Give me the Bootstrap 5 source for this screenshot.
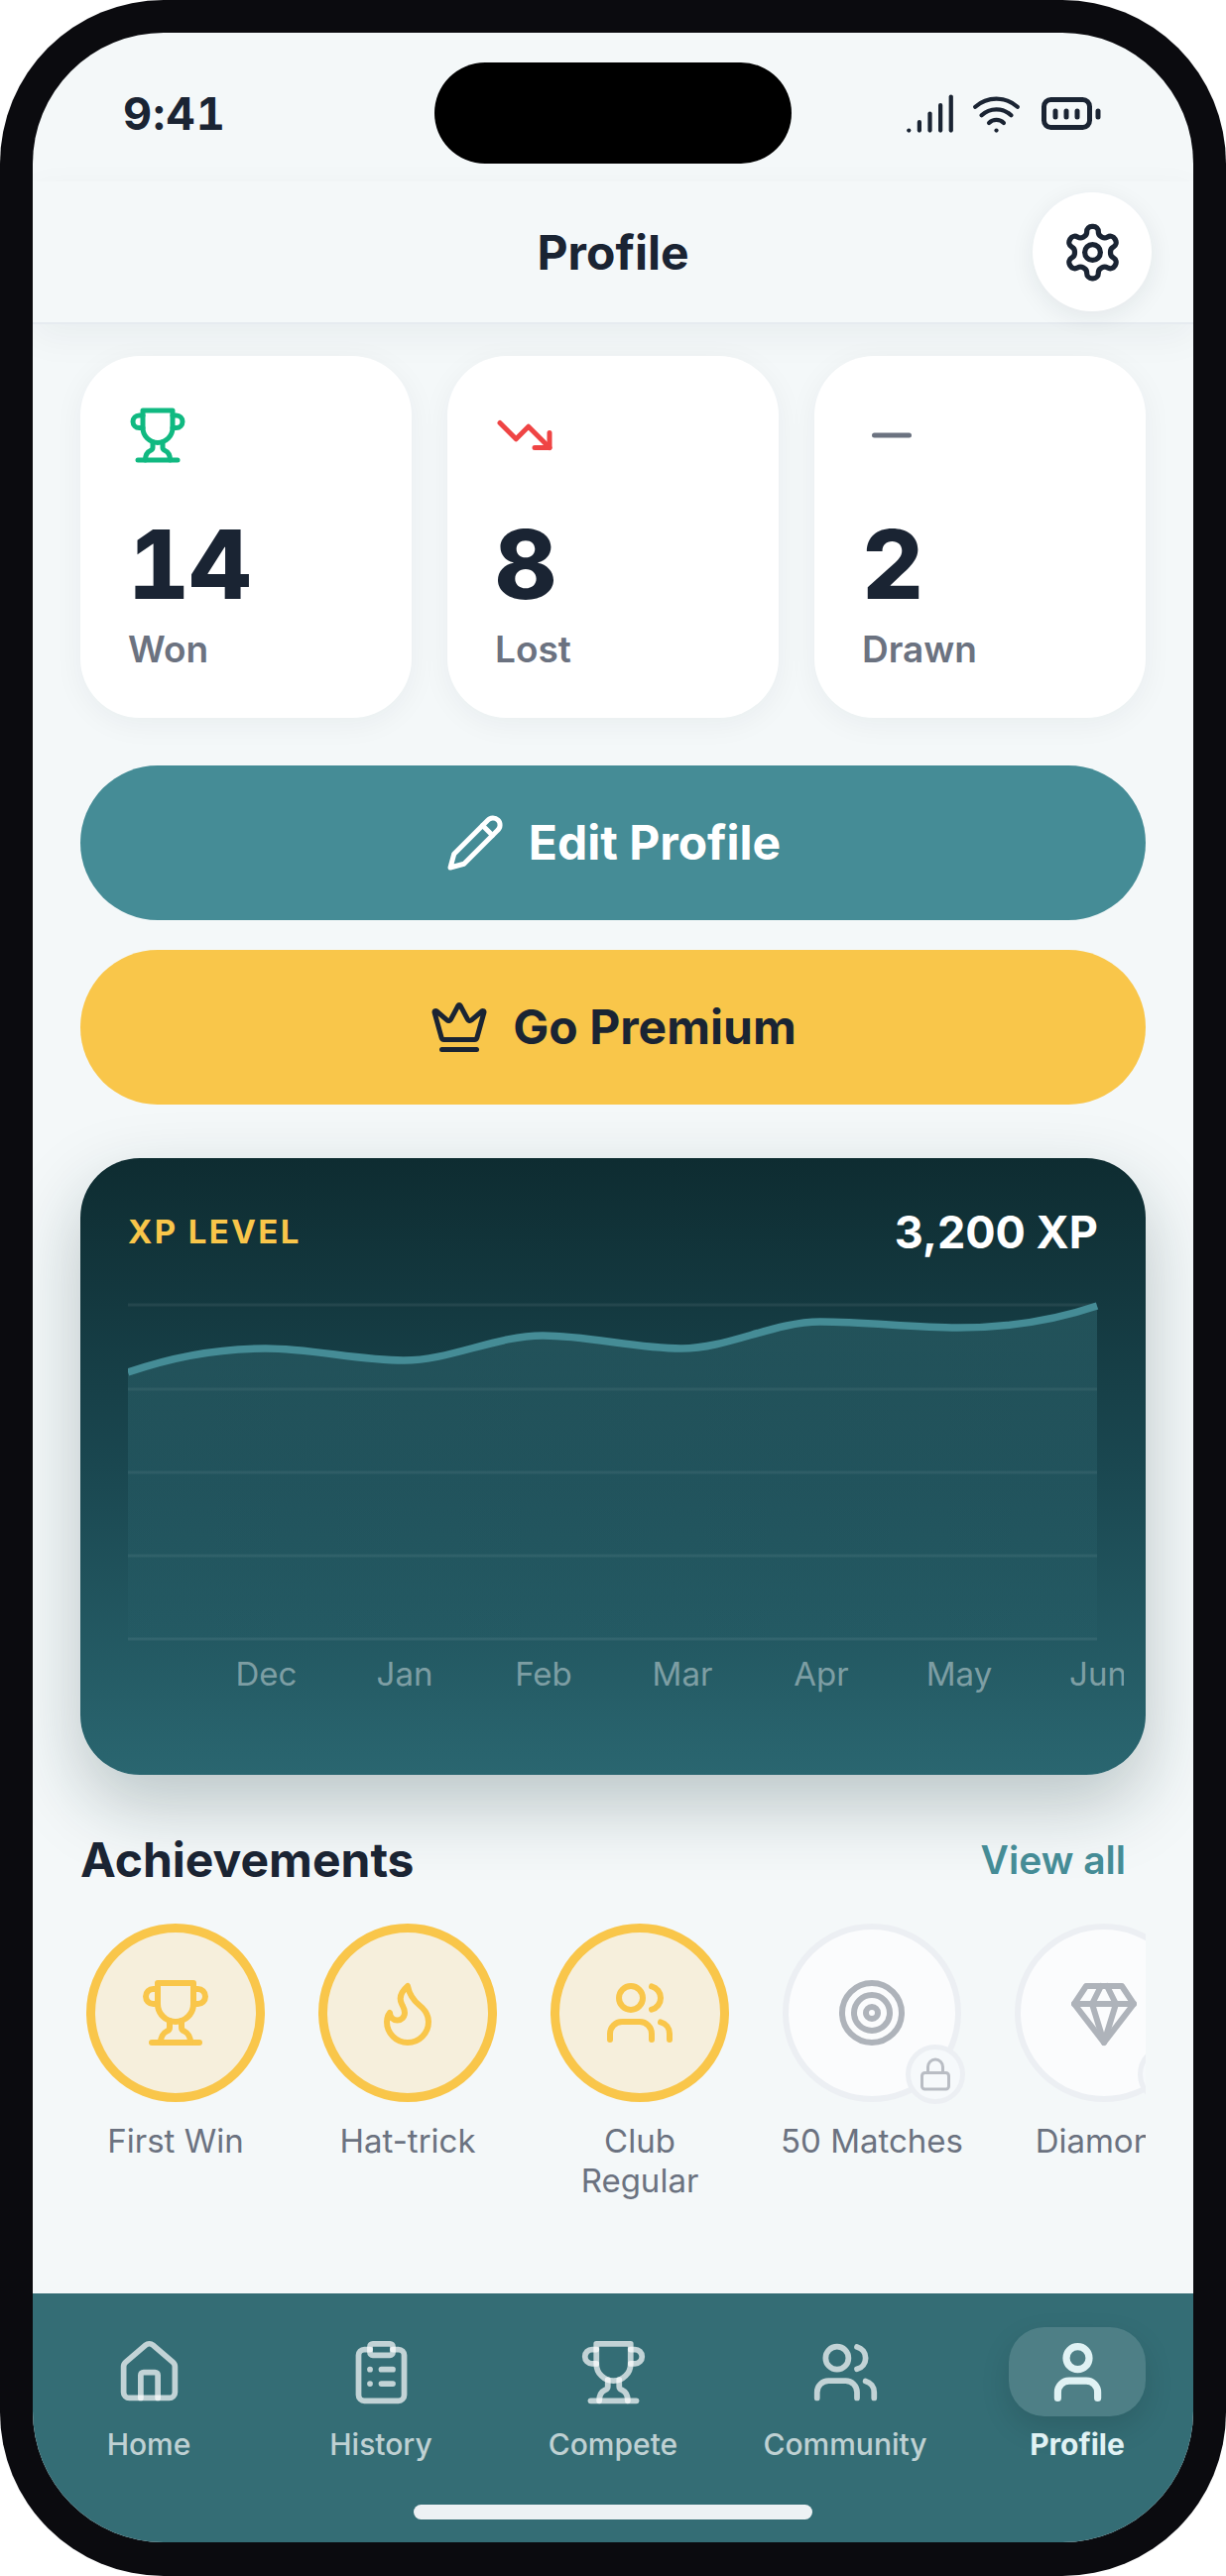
<!DOCTYPE html>
<html lang="en">
<head>
  <meta charset="UTF-8" />
  <meta name="viewport" content="width=device-width, initial-scale=1.0" />
  <title>Profile</title>
  <link href="https://cdn.jsdelivr.net/npm/bootstrap@5.3.3/dist/css/bootstrap.min.css" rel="stylesheet">
  <style>
    body { background: #fff; margin: 0; font-family: Inter, "Noto Sans", sans-serif; color: #1a2433; }
    .phone-frame { width: 1236px; height: 2598px; padding: 33px; background: #0b0b0f; border-radius: 165px; }
    .phone-screen { height: 2531px; background: #f4f8f9; border-radius: 132px; overflow: hidden; position: relative; }
    .island { position: absolute; left: 405px; top: 30px; width: 360px; height: 102px; border-radius: 51px; background: #000; }
    .status-bar { height: 150px; padding: 12px 93px 0 91px; }
    .status-time { font-size: 45px; font-weight: 700; font-variant-numeric: tabular-nums; letter-spacing: 1.2px; line-height: 1; }
    .status-icons svg { display: block; }
    .signal-ico { margin-right: 16px; }
    .top-bar { height: 144px; padding: 0 42px 0 42px; border-bottom: 2px solid #e6ebf0; box-shadow: 0 12px 36px rgba(20, 40, 50, .05); position: relative; }
    .top-title { font-size: 48px; font-weight: 700; margin: 2px 0 0; line-height: 1; }
    .gear-btn { width: 120px; height: 120px; background: #fff; box-shadow: 0 6px 24px rgba(20, 40, 50, .08); color: #1a2433; }
    .spacer-btn { width: 120px; }
    .ico { fill: none; stroke: currentColor; stroke-width: 2; stroke-linecap: round; stroke-linejoin: round; display: block; flex: none; }
    .battery-ico { margin-left: 20px; stroke-width: 5; }
    .page-body { padding: 32px 48px 0; }
    .stat-row { gap: 36px; margin-bottom: 48px; }
    .stat-tile { flex: 1 1 0; height: 365px; padding: 50px 48px 48px; border: 0; border-radius: 60px; box-shadow: 0 6px 30px rgba(20, 40, 50, .05); }
    .stat-num { font-size: 96px; font-weight: 800; font-variant-numeric: tabular-nums; line-height: 1; margin-top: 52px; }
    .stat-cap { font-size: 37px; font-weight: 600; color: #6b7280; line-height: 1.2; margin-top: 16px; }
    .pill-btn { height: 156px; font-size: 48px; font-weight: 700; border: 0; gap: 24px; }
    .pill-teal, .pill-teal:hover { background: #458c96; color: #fff; margin-bottom: 30px; }
    .pill-gold, .pill-gold:hover { background: #f9c64a; color: #1a2433; margin-bottom: 54px; }
    .xp-panel { height: 622px; padding: 45px 0 0 48px; border-radius: 60px; background: linear-gradient(180deg, #0e2c31 0%, #1a4750 50%, #2a6670 100%); box-shadow: 0 30px 72px rgba(15, 46, 51, .25); margin-bottom: 56px; }
    .xp-head { height: 60px; padding-right: 48px; margin-bottom: 27px; }
    .xp-label { font-size: 33px; font-weight: 700; letter-spacing: 2.4px; color: #f9c64a; }
    .xp-total { font-size: 45px; font-weight: 700; color: #fff; }
    .xp-chart { display: block; }
    .xp-chart text { font-size: 33px; fill: rgba(255, 255, 255, .42); text-anchor: middle; }
    .ach-title { font-size: 48px; font-weight: 700; margin: 0; line-height: 60px; }
    .ach-link { font-size: 39px; font-weight: 600; color: #458c96; text-decoration: none; margin-right: 20px; }
    .ach-row { gap: 42px; overflow: hidden; margin-top: 34px; }
    .ach-item { flex: none; width: 192px; text-align: center; }
    .ach-ring { width: 180px; height: 180px; margin: 0 auto; border-radius: 50%; position: relative; }
    .ach-on { background: #f6efdc; border: 9px solid #f9c64a; color: #f9c64a; }
    .ach-off { background: #fbfcfd; border: 6px solid #eceff3; color: #aeb3ba; }
    .lock-chip { position: absolute; right: -10px; bottom: -8px; width: 60px; height: 60px; border-radius: 50%; background: #f6f9fb; border: 5px solid #eceff3; color: #b9bdc4; }
    .ach-name { font-size: 33px; line-height: 40px; color: #6b7280; margin-top: 19px; }
    .tab-bar { position: absolute; left: 0; right: 0; bottom: 0; height: 251px; background: #346d75; padding-top: 34px; }
    .tab-item { flex: 1 1 0; color: rgba(255, 255, 255, .7); text-decoration: none; text-align: center; font-size: 30px; font-weight: 500; line-height: 40px; }
    .tab-item:hover { color: rgba(255, 255, 255, .7); }
    .tab-icon { width: 138px; height: 90px; margin: 0 auto 8px; border-radius: 36px; }
    .tab-on { color: #e0f2f4; font-weight: 700; }
    .tab-on:hover { color: #e0f2f4; }
    .tab-on .tab-icon { background: rgba(255, 255, 255, .13); box-shadow: 0 12px 30px rgba(0, 0, 0, .12); }
    .home-bar { width: 402px; height: 15px; margin: 41px auto 0; border-radius: 9px; background: #edf1f4; }
  </style>
</head>
<body>
  <svg width="0" height="0" class="position-absolute">
    <defs>
      <symbol id="i-trophy" viewBox="0 0 24 24"><path d="M6 9H4.5a2.5 2.5 0 0 1 0-5H6"/><path d="M18 9h1.5a2.5 2.5 0 0 0 0-5H18"/><path d="M4 22h16"/><path d="M10 14.66V17c0 .55-.47.98-.97 1.21C7.85 18.75 7 20.24 7 22"/><path d="M14 14.66V17c0 .55.47.98.97 1.21C16.15 18.75 17 20.24 17 22"/><path d="M18 2H6v7a6 6 0 0 0 12 0V2Z"/></symbol>
      <symbol id="i-users" viewBox="0 0 24 24"><path d="M16 21v-2a4 4 0 0 0-4-4H6a4 4 0 0 0-4 4v2"/><circle cx="9" cy="7" r="4"/><path d="M22 21v-2a4 4 0 0 0-3-3.87"/><path d="M16 3.13a4 4 0 0 1 0 7.75"/></symbol>
      <symbol id="i-lock" viewBox="0 0 24 24"><rect width="18" height="11" x="3" y="11" rx="2" ry="2"/><path d="M7 11V7a5 5 0 0 1 10 0v4"/></symbol>
    </defs>
  </svg>

  <div class="phone-frame">
    <div class="phone-screen">
      <div class="island"></div>

      <div class="status-bar d-flex justify-content-between align-items-center">
        <span class="status-time">9:41</span>
        <div class="status-icons d-flex align-items-center">
          <svg class="ico signal-ico" width="51" height="51" viewBox="0 0 24 24"><path d="M2 20h.01"/><path d="M7 20v-4"/><path d="M12 20v-8"/><path d="M17 20V8"/><path d="M22 4v16"/></svg>
          <svg class="ico" width="51" height="51" viewBox="0 0 24 24"><path d="M12 20h.01"/><path d="M2 8.82a15 15 0 0 1 20 0"/><path d="M5 12.859a10 10 0 0 1 14 0"/><path d="M8.5 16.429a5 5 0 0 1 7 0"/></svg>
          <svg class="ico battery-ico" width="60" height="33" viewBox="0 0 60 33"><rect x="2.5" y="2.5" width="46" height="28" rx="7"/><path d="M14 14v6"/><path d="M25 14v6"/><path d="M36 14v6"/><path d="M57 14v6"/></svg>
        </div>
      </div>

      <header class="top-bar d-flex justify-content-between align-items-center">
        <div class="spacer-btn"></div>
        <h1 class="top-title">Profile</h1>
        <button class="btn gear-btn rounded-circle d-flex align-items-center justify-content-center p-0 border-0">
          <svg class="ico" width="63" height="63" viewBox="0 0 24 24"><path d="M12.22 2h-.44a2 2 0 0 0-2 2v.18a2 2 0 0 1-1 1.73l-.43.25a2 2 0 0 1-2 0l-.15-.08a2 2 0 0 0-2.73.73l-.22.38a2 2 0 0 0 .73 2.73l.15.1a2 2 0 0 1 1 1.72v.51a2 2 0 0 1-1 1.74l-.15.09a2 2 0 0 0-.73 2.73l.22.38a2 2 0 0 0 2.73.73l.15-.08a2 2 0 0 1 2 0l.43.25a2 2 0 0 1 1 1.73V20a2 2 0 0 0 2 2h.44a2 2 0 0 0 2-2v-.18a2 2 0 0 1 1-1.73l.43-.25a2 2 0 0 1 2 0l.15.08a2 2 0 0 0 2.73-.73l.22-.39a2 2 0 0 0-.73-2.73l-.15-.08a2 2 0 0 1-1-1.74v-.5a2 2 0 0 1 1-1.74l.15-.09a2 2 0 0 0 .73-2.73l-.22-.38a2 2 0 0 0-2.73-.73l-.15.08a2 2 0 0 1-2 0l-.43-.25a2 2 0 0 1-1-1.73V4a2 2 0 0 0-2-2z"/><circle cx="12" cy="12" r="3"/></svg>
        </button>
      </header>

      <main class="page-body">
        <div class="stat-row d-flex">
          <div class="card stat-tile">
            <svg class="ico" width="60" height="60" style="color:#10b981"><use href="#i-trophy"/></svg>
            <div class="stat-num">14</div>
            <div class="stat-cap">Won</div>
          </div>
          <div class="card stat-tile">
            <svg class="ico" width="60" height="60" viewBox="0 0 24 24" style="color:#ef4444"><polyline points="22 17 13.5 8.5 8.5 13.5 2 7"/><polyline points="16 17 22 17 22 11"/></svg>
            <div class="stat-num">8</div>
            <div class="stat-cap">Lost</div>
          </div>
          <div class="card stat-tile">
            <svg class="ico" width="60" height="60" viewBox="0 0 24 24" style="color:#6b7280"><path d="M5 12h14"/></svg>
            <div class="stat-num">2</div>
            <div class="stat-cap">Drawn</div>
          </div>
        </div>

        <button class="btn pill-btn pill-teal w-100 rounded-pill d-flex align-items-center justify-content-center">
          <svg class="ico" width="60" height="60" viewBox="0 0 24 24"><path d="M17 3a2.85 2.83 0 1 1 4 4L7.5 20.5 2 22l1.5-5.5Z"/><path d="m15 5 4 4"/></svg>
          Edit Profile
        </button>
        <button class="btn pill-btn pill-gold w-100 rounded-pill d-flex align-items-center justify-content-center">
          <svg class="ico" width="60" height="60" viewBox="0 0 24 24"><path d="M11.562 3.266a.5.5 0 0 1 .876 0L15.39 8.87a1 1 0 0 0 1.516.294L21.183 5.5a.5.5 0 0 1 .798.519l-2.834 10.246a1 1 0 0 1-.956.734H5.81a1 1 0 0 1-.957-.734L2.02 6.02a.5.5 0 0 1 .798-.519l4.276 3.664a1 1 0 0 0 1.516-.294z"/><path d="M5 21h14"/></svg>
          Go Premium
        </button>

        <section class="xp-panel">
          <div class="xp-head d-flex justify-content-between align-items-center">
            <span class="xp-label">XP LEVEL</span>
            <span class="xp-total">3,200 XP</span>
          </div>
          <svg class="xp-chart" width="1004" height="420" viewBox="0 0 1004 420">
            <defs>
              <linearGradient id="xpFill" x1="0" y1="0" x2="0" y2="1">
                <stop offset="0" stop-color="#458c96" stop-opacity=".3"/>
                <stop offset="1" stop-color="#458c96" stop-opacity=".03"/>
              </linearGradient>
            </defs>
            <g stroke="rgba(255,255,255,.07)" stroke-width="3">
              <path d="M0 16H977"/><path d="M0 101H977"/><path d="M0 185H977"/><path d="M0 269H977"/><path d="M0 353H977"/>
            </g>
            <path fill="url(#xpFill)" d="M0 84C46 68 92 60 138.5 60C185 60 232 72 278 72C325 72 371 47 418 47C465 47 511 60 558 60C605 60 651 33 698 33C745 33 790 39 837 39C884 39 930 33 977 17V353H0Z"/>
            <path fill="none" stroke="#458c96" stroke-width="7.5" d="M0 84C46 68 92 60 138.5 60C185 60 232 72 278 72C325 72 371 47 418 47C465 47 511 60 558 60C605 60 651 33 698 33C745 33 790 39 837 39C884 39 930 33 977 17"/>
            <text x="139.5" y="400">Dec</text>
            <text x="279" y="400">Jan</text>
            <text x="419" y="400">Feb</text>
            <text x="559" y="400">Mar</text>
            <text x="699" y="400">Apr</text>
            <text x="838" y="400">May</text>
            <text x="978" y="400">Jun</text>
          </svg>
        </section>

        <div class="d-flex justify-content-between align-items-center">
          <h2 class="ach-title">Achievements</h2>
          <a class="ach-link" href="#">View all</a>
        </div>

        <div class="ach-row d-flex">
          <div class="ach-item">
            <div class="ach-ring ach-on d-flex align-items-center justify-content-center"><svg class="ico" width="72" height="72"><use href="#i-trophy"/></svg></div>
            <div class="ach-name">First Win</div>
          </div>
          <div class="ach-item">
            <div class="ach-ring ach-on d-flex align-items-center justify-content-center"><svg class="ico" width="72" height="72" viewBox="0 0 24 24"><path d="M8.5 14.5A2.5 2.5 0 0 0 11 12c0-1.38-.5-2-1-3-1.072-2.143-.224-4.054 2-6 .5 2.5 2 4.9 4 6.5 2 1.6 3 3.5 3 5.5a7 7 0 1 1-14 0c0-1.153.433-2.294 1-3a2.5 2.5 0 0 0 2.5 2.5z"/></svg></div>
            <div class="ach-name">Hat-trick</div>
          </div>
          <div class="ach-item">
            <div class="ach-ring ach-on d-flex align-items-center justify-content-center"><svg class="ico" width="72" height="72"><use href="#i-users"/></svg></div>
            <div class="ach-name">Club Regular</div>
          </div>
          <div class="ach-item">
            <div class="ach-ring ach-off d-flex align-items-center justify-content-center">
              <svg class="ico" width="72" height="72" viewBox="0 0 24 24"><circle cx="12" cy="12" r="10"/><circle cx="12" cy="12" r="6"/><circle cx="12" cy="12" r="2"/></svg>
              <div class="lock-chip d-flex align-items-center justify-content-center"><svg class="ico" width="36" height="36"><use href="#i-lock"/></svg></div>
            </div>
            <div class="ach-name">50 Matches</div>
          </div>
          <div class="ach-item">
            <div class="ach-ring ach-off d-flex align-items-center justify-content-center">
              <svg class="ico" width="72" height="72" viewBox="0 0 24 24"><path d="M6 3h12l4 6-10 13L2 9Z"/><path d="M11 3 8 9l4 13 4-13-3-6"/><path d="M2 9h20"/></svg>
              <div class="lock-chip d-flex align-items-center justify-content-center"><svg class="ico" width="36" height="36"><use href="#i-lock"/></svg></div>
            </div>
            <div class="ach-name">Diamond</div>
          </div>
        </div>
      </main>

      <nav class="tab-bar">
        <div class="d-flex">
          <a class="tab-item" href="#">
            <div class="tab-icon d-flex align-items-center justify-content-center"><svg class="ico" width="69" height="69" viewBox="0 0 24 24"><path d="M15 21v-8a1 1 0 0 0-1-1h-4a1 1 0 0 0-1 1v8"/><path d="M3 10a2 2 0 0 1 .709-1.528l7-5.999a2 2 0 0 1 2.582 0l7 5.999A2 2 0 0 1 21 10v9a2 2 0 0 1-2 2H5a2 2 0 0 1-2-2z"/></svg></div>
            Home
          </a>
          <a class="tab-item" href="#">
            <div class="tab-icon d-flex align-items-center justify-content-center"><svg class="ico" width="69" height="69" viewBox="0 0 24 24"><rect width="8" height="4" x="8" y="2" rx="1" ry="1"/><path d="M16 4h2a2 2 0 0 1 2 2v14a2 2 0 0 1-2 2H6a2 2 0 0 1-2-2V6a2 2 0 0 1 2-2h2"/><path d="M12 11h4"/><path d="M12 16h4"/><path d="M8 11h.01"/><path d="M8 16h.01"/></svg></div>
            History
          </a>
          <a class="tab-item" href="#">
            <div class="tab-icon d-flex align-items-center justify-content-center"><svg class="ico" width="69" height="69"><use href="#i-trophy"/></svg></div>
            Compete
          </a>
          <a class="tab-item" href="#">
            <div class="tab-icon d-flex align-items-center justify-content-center"><svg class="ico" width="69" height="69"><use href="#i-users"/></svg></div>
            Community
          </a>
          <a class="tab-item tab-on" href="#">
            <div class="tab-icon d-flex align-items-center justify-content-center"><svg class="ico" width="69" height="69" viewBox="0 0 24 24" style="stroke-width:2.5"><path d="M19 21v-2a4 4 0 0 0-4-4H9a4 4 0 0 0-4 4v2"/><circle cx="12" cy="7" r="4"/></svg></div>
            Profile
          </a>
        </div>
        <div class="home-bar"></div>
      </nav>
    </div>
  </div>

  <script src="https://cdn.jsdelivr.net/npm/bootstrap@5.3.3/dist/js/bootstrap.bundle.min.js"></script>
</body>
</html>
